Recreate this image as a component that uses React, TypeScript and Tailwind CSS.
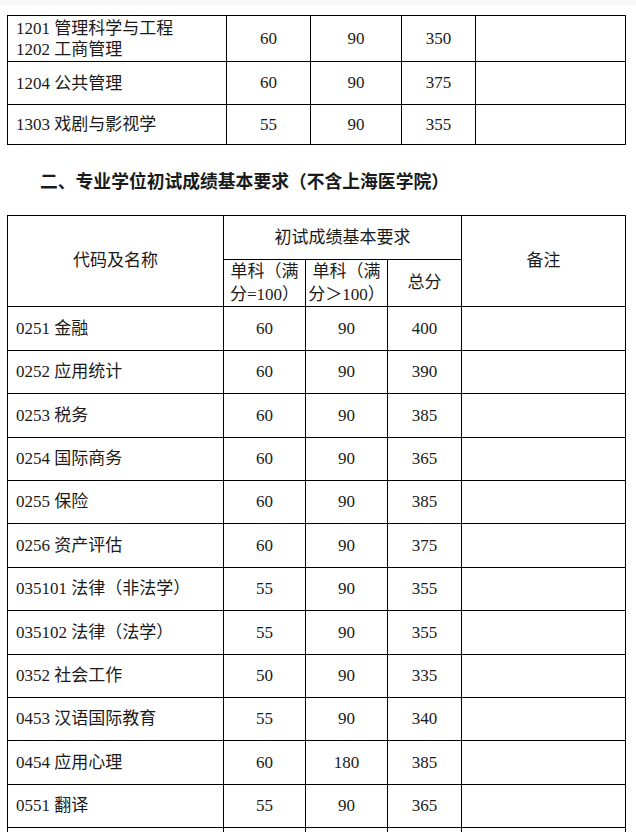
import React from 'react';

const font = { fontFamily: '"Liberation Serif", "Noto Sans CJK SC", serif' };

const topRows = [
  { name: ['1201 管理科学与工程', '1202 工商管理'], a: '60', b: '90', total: '350', h: 'h-[46px]' },
  { name: ['1204 公共管理'], a: '60', b: '90', total: '375', h: 'h-[43px]' },
  { name: ['1303 戏剧与影视学'], a: '55', b: '90', total: '355', h: 'h-[40px]' },
];

const proRows = [
  ['0251 金融', '60', '90', '400'],
  ['0252 应用统计', '60', '90', '390'],
  ['0253 税务', '60', '90', '385'],
  ['0254 国际商务', '60', '90', '365'],
  ['0255 保险', '60', '90', '385'],
  ['0256 资产评估', '60', '90', '375'],
  ['035101 法律（非法学）', '55', '90', '355'],
  ['035102 法律（法学）', '55', '90', '355'],
  ['0352 社会工作', '50', '90', '335'],
  ['0453 汉语国际教育', '55', '90', '340'],
  ['0454 应用心理', '60', '180', '385'],
  ['0551 翻译', '55', '90', '365'],
  // next row only shows its top edge in the screenshot
  ['', '', '', ''],
];

const cell = 'border border-black p-0';

export default function App() {
  return (
    <div className="min-h-[832px] w-[636px] bg-white text-[#1a1a1a]" style={font}>
      <div className="h-[5px] bg-[#f7f7f7]" />
      <div className="pt-[10px] pl-[7px]">
        <table className="table-fixed border-collapse w-[618px] text-[17px]">
          <colgroup>
            <col className="w-[219px]" />
            <col className="w-[84px]" />
            <col className="w-[91px]" />
            <col className="w-[74px]" />
            <col className="w-[150px]" />
          </colgroup>
          <tbody>
            {topRows.map((r) => (
              <tr key={r.total + r.name[0]} className={r.h}>
                <td className={`${cell} pl-[8px] leading-[21px]`}>
                  {r.name.map((n) => (
                    <div key={n}>{n}</div>
                  ))}
                </td>
                <td className={`${cell} text-center`}>{r.a}</td>
                <td className={`${cell} text-center`}>{r.b}</td>
                <td className={`${cell} text-center`}>{r.total}</td>
                <td className={cell}></td>
              </tr>
            ))}
          </tbody>
        </table>
      </div>

      <div className="h-[70px] flex items-center pl-[40px]">
        <h2
          className="text-[17.8px] font-bold leading-[24px]"
          style={{ fontFamily: '"Noto Sans CJK SC", "Noto Sans", sans-serif' }}
        >
          二、专业学位初试成绩基本要求（不含上海医学院）
        </h2>
      </div>

      <div className="pl-[7px]">
        <table className="table-fixed border-collapse w-[618px] text-[17px]">
          <colgroup>
            <col className="w-[216px]" />
            <col className="w-[82px]" />
            <col className="w-[82px]" />
            <col className="w-[74px]" />
            <col className="w-[164px]" />
          </colgroup>
          <tbody>
            <tr className="h-[44px]">
              <td rowSpan={2} className={`${cell} text-center`}>代码及名称</td>
              <td colSpan={3} className={`${cell} text-center`}>初试成绩基本要求</td>
              <td rowSpan={2} className={`${cell} text-center`}>备注</td>
            </tr>
            <tr className="h-[46px]">
              <td className={`${cell} text-center leading-[23px]`}>
                单科（满
                <br />
                分=100）
              </td>
              <td className={`${cell} text-center leading-[23px]`}>
                单科（满
                <br />
                分＞100）
              </td>
              <td className={`${cell} text-center`}>总分</td>
            </tr>
            {proRows.map((r, i) => (
              <tr key={r[0] || 'next'} className={i % 5 === 0 || i % 5 === 2 ? 'h-[44px]' : 'h-[43px]'}>
                <td className={`${cell} pl-[8px]`}>{r[0]}</td>
                <td className={`${cell} text-center`}>{r[1]}</td>
                <td className={`${cell} text-center`}>{r[2]}</td>
                <td className={`${cell} text-center`}>{r[3]}</td>
                <td className={cell}></td>
              </tr>
            ))}
          </tbody>
        </table>
      </div>
    </div>
  );
}
